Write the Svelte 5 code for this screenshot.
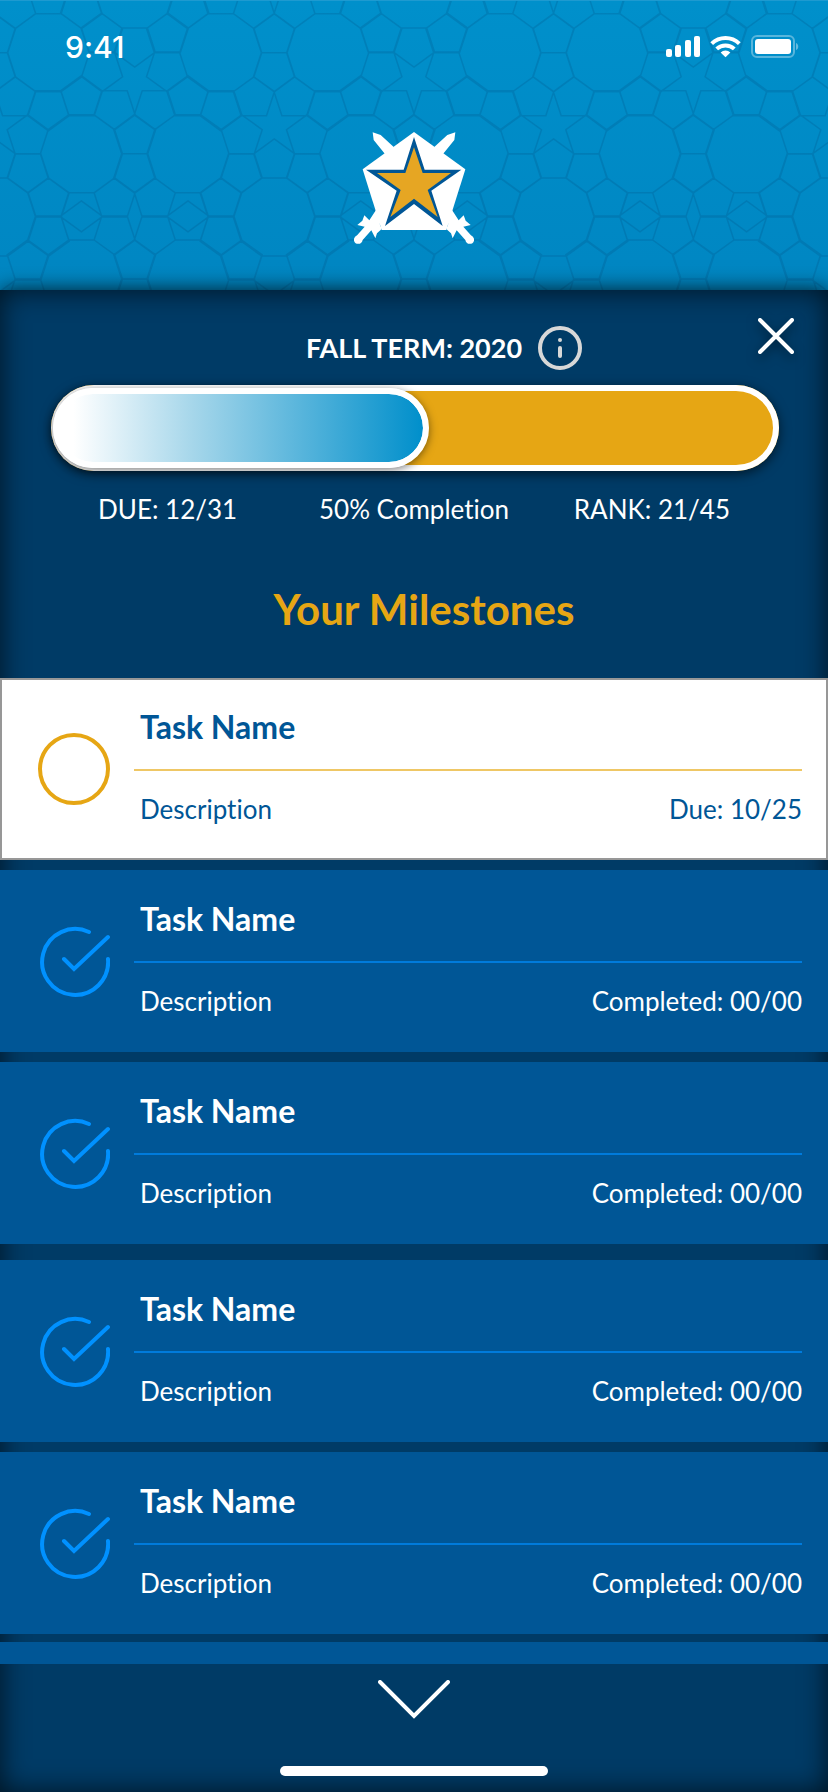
<script>
  const term = "FALL TERM: 2020";
  const completion = 50;

  let groups = [
    [
      { id: 1, name: "Task Name", description: "Description", date: "Due: 10/25", done: false },
      { id: 2, name: "Task Name", description: "Description", date: "Completed: 00/00", done: true },
      { id: 3, name: "Task Name", description: "Description", date: "Completed: 00/00", done: true },
    ],
    [
      { id: 4, name: "Task Name", description: "Description", date: "Completed: 00/00", done: true },
      { id: 5, name: "Task Name", description: "Description", date: "Completed: 00/00", done: true },
    ],
  ];

  // Header pattern: decagons, each with a ring of ten pentagons around it
  const radius = 41;
  const period = 279.3;
  const rows = [
    { y: -12, starts: [134.7] },
    { y: 51.7, starts: [220.7, 327.7] },
    { y: 152.8, starts: [81.4, 188] },
    { y: 216, starts: [274.3] },
    { y: 278, starts: [81.4, 188] },
  ];

  const point = (x, y, r, deg) => {
    const a = (deg * Math.PI) / 180;
    return `${(x + r * Math.cos(a)).toFixed(1)} ${(y + r * Math.sin(a)).toFixed(1)}`;
  };

  const ring = (x, y) => {
    let d = "";
    for (let i = 0; i < 10; i++) {
      const mid = i * 36 + 18;
      // side corners of the pentagon and its tip, measured from the centre
      d += `M${point(x, y, radius, mid - 18)}`;
      d += `L${point(x, y, radius, mid + 18)}`;
      d += `L${point(x, y, radius * 1.618, mid + 18)}`;
      d += `L${point(x, y, radius * 1.902, mid)}`;
      d += `L${point(x, y, radius * 1.618, mid - 18)}`;
    }
    return d;
  };

  let pattern = "";
  for (const row of rows) {
    for (const start of row.starts) {
      for (let n = -2; n < 4; n++) {
        pattern += ring(start + n * period, row.y);
      }
    }
  }
</script>

<main>
  <header>
    <svg class="pattern" viewBox="0 0 828 290" preserveAspectRatio="xMidYMin slice" aria-hidden="true">
      <path d={pattern} />
    </svg>

    <div class="status">
      <span class="time">9:41</span>
      <svg width="134" height="24" viewBox="0 0 134 24" fill="#fff" aria-hidden="true">
        <rect x="0" y="14" width="6" height="8" rx="2" />
        <rect x="9" y="10" width="6" height="12" rx="2" />
        <rect x="19" y="5" width="6" height="17" rx="2" />
        <rect x="28" y="1" width="6" height="21" rx="2" />
        <g fill="none" stroke="#fff" stroke-width="4">
          <path d="M45.7 8.6a20 20 0 0 1 27.6 0" />
          <path d="M50.7 13.9a13 13 0 0 1 17.6 0" />
        </g>
        <path d="M54.6 17.6a7 7 0 0 1 9.8 0L59.5 22.3z" />
        <rect x="86" y="1" width="42" height="21" rx="5" fill="none" stroke="#fff" stroke-opacity=".35" stroke-width="2" />
        <rect x="89" y="4" width="36" height="15" rx="3" />
        <path d="M130 8c3 1 3 6 0 7z" fill-opacity=".4" />
      </svg>
    </div>

    <svg class="emblem" width="120" height="112" viewBox="72 66 360 336" role="img" aria-label="Crest">
      <g fill="#fff">
        <path d="M252 66L406 178L349 360H155L98 178z" />
        <path d="M128 67L152 75L192 112L165 132L131 90zM138 300L118 331L103 316L97 332L82 345L104 350L82 375Q70 382 72 392Q76 404 90 401Q97 399 98 390L124 361L136 385L141 370L155 357L149 341L170 330z" />
        <path d="M376 67L352 75L312 112L339 132L373 90zM366 300L386 331L401 316L407 332L422 345L400 350L422 375Q434 382 432 392Q428 404 414 401Q407 399 406 390L380 361L368 385L363 370L349 357L355 341L334 330z" />
      </g>
      <path fill="#005696" d="M252 81L284 179H394L304 242L338 348L252 282L165 348L200 242L108 179H221z" />
      <path fill="#e6a623" d="M252 112L278 189H363L293 240L323 321L252 266L181 321L212 240L141 189H226z" />
    </svg>
  </header>

  <section class="panel">
    <div class="term">
      <h1>{term}</h1>
      <div class="actions">
        <button class="info" aria-label="About this term">
          <svg width="44" height="44" viewBox="0 0 44 44" aria-hidden="true">
            <circle cx="22" cy="22" r="20" fill="none" stroke="#d8d8d8" stroke-width="4" />
            <circle cx="22" cy="14" r="2" fill="#d8d8d8" />
            <path d="M22 22v8" stroke="#d8d8d8" stroke-width="4" stroke-linecap="round" />
          </svg>
        </button>
        <button class="close" aria-label="Close">
          <svg width="36" height="36" viewBox="0 0 36 36" aria-hidden="true">
            <path d="M2 2l32 32M34 2L2 34" stroke="#fff" stroke-width="4" stroke-linecap="round" />
          </svg>
        </button>
      </div>
    </div>

    <div
      class="track"
      role="progressbar"
      aria-label="Term completion"
      aria-valuemin="0"
      aria-valuemax="100"
      aria-valuenow={completion}
    >
      <div class="fill" style="width: calc({completion}% + 13px)"></div>
    </div>

    <div class="stats">
      <span>DUE: 12/31</span>
      <span>{completion}% Completion</span>
      <span class="rank">RANK: 21/45</span>
    </div>

    <h2>Your Milestones</h2>

    <div class="groups">
      {#each groups as group}
        <ul>
          {#each group as task (task.id)}
            <li class="card" class:open={!task.done}>
              <div class="tick">
                <input type="checkbox" aria-label="{task.name} done" bind:checked={task.done} />
                <svg width="72" height="72" viewBox="0 0 72 72" aria-hidden="true">
                  {#if task.done}
                    <path d="M51 7A33 33 0 1 0 70 34" />
                    <path d="M26 34L36 44L70 12" />
                  {:else}
                    <circle cx="36" cy="36" r="34" />
                  {/if}
                </svg>
              </div>
              <div class="body">
                <h3>{task.name}</h3>
                <div class="details">
                  <span>{task.description}</span>
                  <span>{task.date}</span>
                </div>
              </div>
            </li>
          {/each}
        </ul>
      {/each}
      <div class="next"></div>
    </div>

    <footer>
      <button class="more" aria-label="Show more milestones">
        <svg width="72" height="40" viewBox="0 0 72 40" aria-hidden="true">
          <path d="M2 2l34 34L70 2" fill="none" stroke="#fff" stroke-width="4" stroke-linecap="round" />
        </svg>
      </button>
      <div class="home"></div>
    </footer>
  </section>
</main>

<style>
  :global(body) {
    margin: 0;
    background: #003b66;
  }

  main {
    display: flex;
    flex-direction: column;
    min-height: 100vh;
    font-family: Lato, "Open Sans", sans-serif;
    font-variant-ligatures: none;
    color: #fff;
  }

  h1,
  h2,
  h3,
  ul {
    margin: 0;
    padding: 0;
  }

  button {
    padding: 0;
    border: 0;
    background: none;
    cursor: pointer;
  }

  svg {
    display: block;
  }

  header {
    position: relative;
    box-sizing: border-box;
    height: 290px;
    border-top: 1px solid #1e9ad0;
    background: linear-gradient(#0090cb, #0086c2);
    overflow: hidden;
  }

  .pattern {
    position: absolute;
    inset: 0;
    width: 100%;
    height: 100%;
  }

  .pattern path {
    fill: none;
    stroke: rgba(0, 70, 120, 0.2);
    stroke-width: 1.5;
  }

  .status {
    position: relative;
    display: flex;
    justify-content: space-between;
    align-items: center;
    padding: 28px 28px 0 65px;
  }

  .time {
    font-family: Inter, sans-serif;
    font-size: 30px;
    font-weight: 500;
    line-height: 36px;
  }

  .emblem {
    position: relative;
    margin: 67px auto 0;
  }

  .panel {
    position: relative;
    display: flex;
    flex: 1;
    flex-direction: column;
    padding-top: 28px;
    background: #003b66;
    box-shadow:
      0 0 20px rgba(0, 0, 0, 0.8),
      inset 0 0 28px rgba(0, 0, 0, 0.7);
  }

  .term {
    display: grid;
    grid-template-columns: 1fr auto 1fr;
    gap: 16px;
    height: 52px;
    padding: 0 34px;
  }

  h1 {
    grid-column: 2;
    align-self: end;
    font-size: 27px;
    font-weight: 700;
    line-height: 44px;
  }

  .actions {
    display: flex;
    justify-content: space-between;
  }

  .info {
    align-self: flex-end;
  }

  .close {
    align-self: flex-start;
    filter: drop-shadow(0 4px 6px rgba(0, 0, 0, 0.5));
  }

  .track {
    box-sizing: border-box;
    height: 86px;
    margin: 15px 49px 0 51px;
    padding: 3px 0 3px 2px;
    border-radius: 43px;
    background: #e6a614;
    box-shadow:
      inset 0 0 0 6px #fff,
      0 3px 12px rgba(0, 0, 0, 0.6);
  }

  .fill {
    box-sizing: border-box;
    height: 80px;
    border: 6px solid #fff;
    border-radius: 40px;
    background:
      linear-gradient(90deg, #fff 4%, #a5d6ea 37%, #008fcb) padding-box,
      linear-gradient(#fff, #fff) border-box;
    box-shadow: 0 2px 8px rgba(0, 0, 0, 0.5);
  }

  .stats {
    display: grid;
    grid-template-columns: 1fr auto 1fr;
    margin-top: 20px;
    padding: 0 98px;
    font-size: 26px;
    line-height: 36px;
  }

  .rank {
    text-align: right;
  }

  h2 {
    margin-top: 54px;
    padding-left: 20px;
    font-size: 42px;
    font-weight: 700;
    line-height: 56px;
    text-align: center;
    color: #e6a614;
  }

  .groups {
    display: flex;
    flex-direction: column;
    gap: 16px;
    margin-top: 41px;
  }

  ul {
    display: flex;
    flex-direction: column;
    gap: 10px;
    list-style: none;
  }

  .card {
    display: flex;
    gap: 24px;
    box-sizing: border-box;
    height: 182px;
    padding: 0 26px 0 38px;
    background: #005696;
  }

  .card.open {
    background: #fff;
    color: #005696;
    box-shadow: inset 0 0 0 2px #979797;
  }

  .tick {
    position: relative;
    align-self: center;
    width: 72px;
    height: 72px;
  }

  .tick input {
    position: absolute;
    inset: 0;
    width: 100%;
    height: 100%;
    margin: 0;
    opacity: 0;
    cursor: pointer;
  }

  .tick svg {
    fill: none;
    stroke: #0091ff;
    stroke-width: 4;
    stroke-linecap: round;
  }

  .open .tick svg {
    stroke: #e6a614;
  }

  .body {
    flex: 1;
    padding-top: 27px;
  }

  h3 {
    padding: 0 0 20px 6px;
    border-bottom: 2px solid #007bdc;
    font-size: 32px;
    font-weight: 700;
    line-height: 44px;
  }

  .open h3 {
    border-color: #efc765;
  }

  .details {
    display: flex;
    justify-content: space-between;
    padding: 20px 0 0 6px;
    font-size: 26px;
    line-height: 36px;
  }

  .next {
    height: 22px;
    margin-top: -8px;
    background: #005696;
  }

  footer {
    display: flex;
    flex: 1;
    flex-direction: column;
    align-items: center;
    justify-content: space-between;
    padding: 16px 0;
  }

  .home {
    width: 268px;
    height: 10px;
    border-radius: 5px;
    background: #fff;
  }
</style>
